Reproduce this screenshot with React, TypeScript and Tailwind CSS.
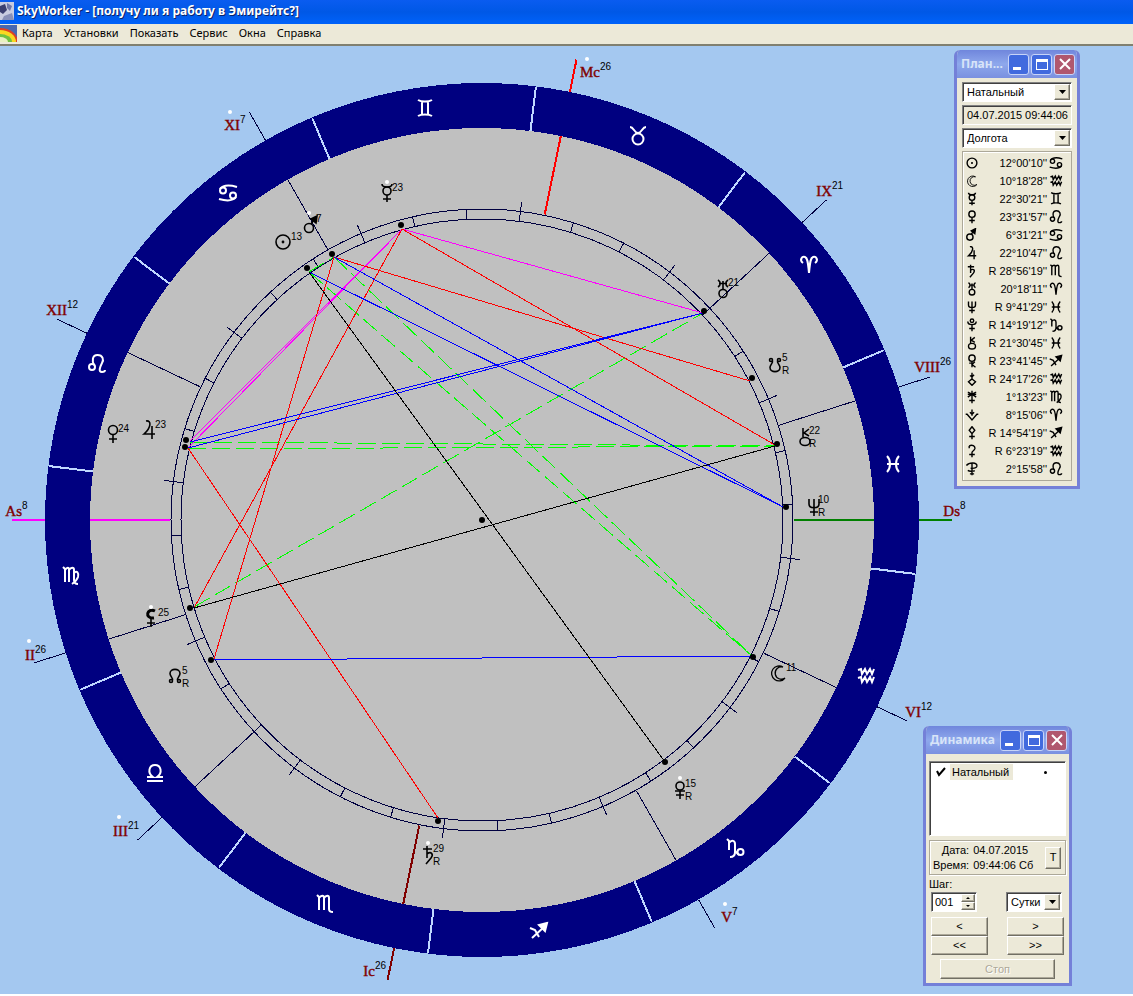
import React, { useState } from "react";

const CX = 482;
const CY = 520;

// every glyph is drawn in a 20x20 box
const glyphs: Record<string, React.ReactNode> = {
  aries: <path d="M4 8C0 5 3 1 6 2C9 3 9 9 10 18C11 9 11 3 14 2C17 1 20 5 16 8" />,
  taurus: (
    <>
      <circle cx="10" cy="13" r="5.5" />
      <path d="M2 1C6 1 6 7 10 7S14 1 18 1" />
    </>
  ),
  gemini: <path d="M3 1C6 3 14 3 17 1M3 17C6 15 14 15 17 17M7 3V16M13 3V16" />,
  cancer: (
    <>
      <circle cx="5" cy="7.5" r="3" />
      <circle cx="15" cy="12.5" r="3" />
      <path d="M2 6C5 2 12 2 19 4M18 14C15 18 8 18 1 16" />
    </>
  ),
  leo: (
    <>
      <circle cx="5" cy="13" r="3" />
      <path d="M7 11C5 7 5 1 10.5 1S17 6 15 9C13 13 11 18 15 18C17 18 18 17 18 16" />
    </>
  ),
  virgo: (
    <path d="M2 1L4 3V16M4 4C6 1 8 1 8 4V16M8 4C10 1 13 1 13 4V14C13 17 15 18 17 18M13 7C16 4 18 7 17 11C16 14 14 16 11 18" />
  ),
  libra: <path d="M2 18H18M2 14H8C2 10 4 2 10 2S18 10 12 14H18" />,
  scorpio: <path d="M2 1L4 3V16M4 4C6 1 9 1 9 4V16M9 4C11 1 14 1 14 4V15C14 18 16 18 18 18" />,
  sagittarius: (
    <>
      <path d="M3 17L15 6M1 7L6 9L10 16" />
      <path d="M18 2L10 4L16 10Z" fill="currentColor" />
    </>
  ),
  capricorn: (
    <>
      <path d="M2 1L4 3V12M4 5C7 1 10 3 10 6V14C10 18 8 19 5 19M10 13L14 17" />
      <circle cx="15.5" cy="14" r="3" />
    </>
  ),
  aquarius: (
    <>
      <path d="M2 4L5 3L6 8L9 3L11 8L14 3L16 8L18 3" />
      <path d="M2 12L5 11L6 16L9 11L11 16L14 11L16 16L18 11" />
    </>
  ),
  pisces: <path d="M4 2C8 6 8 14 4 18M16 2C12 6 12 14 16 18M4 10H16" />,

  sun: (
    <>
      <circle cx="10" cy="10" r="7" />
      <circle cx="10" cy="10" r="0.6" />
    </>
  ),
  moon: (
    <path
      d="M15 4A7.5 7.5 0 1 0 17 15M15 4A6.2 6.2 0 1 0 17 15"
      strokeWidth="1.3"
    />
  ),
  mercury: (
    <>
      <circle cx="10" cy="8" r="4" />
      <path d="M5 1C5 5 15 5 15 1M10 12V19M6 16H14" />
    </>
  ),
  venus: (
    <>
      <circle cx="10" cy="6" r="4.5" />
      <path d="M10 11V19M6 15H14" />
    </>
  ),
  mars: (
    <>
      <circle cx="7" cy="13" r="4.5" />
      <path d="M9 9L13 3" />
      <path d="M15 1L9 4L14 8Z" fill="currentColor" />
    </>
  ),
  jupiter: <path d="M7 1C13 0 12 8 5 14H16M13 6V19" />,
  saturn: <path d="M4 4H13M8 1V13M8 9C12 6 15 9 12 13L7 19" />,
  uranus: (
    <>
      <circle cx="10" cy="14.5" r="4" />
      <path d="M10 2V10M5 1C8 3 8 6 5 8M15 1C12 3 12 6 15 8M6 4.5H14" />
    </>
  ),
  neptune: <path d="M5 2V7C5 12 15 12 15 7V2M10 2V19M6 15H14" />,
  pluto: (
    <>
      <circle cx="10" cy="4" r="2.5" />
      <path d="M4 5C4 11 16 11 16 5M10 10V19M6 15H14" />
    </>
  ),
  plutoRound: (
    <>
      <circle cx="10" cy="6" r="4" />
      <path d="M5 11H15M10 11V19M6 15H14" />
    </>
  ),
  chiron: (
    <>
      <ellipse cx="10" cy="14.5" rx="5" ry="4" />
      <path d="M8 1V10M14 2L9 6L14 9" />
    </>
  ),
  selena: (
    <>
      <circle cx="10" cy="6" r="4.5" />
      <path d="M10 11V19M14 11L10 15L15 19M6 13H10" />
    </>
  ),
  pallas: <path d="M10 1V10M7 5L10 7L13 4M10 10L15 14L10 19L5 14Z" />,
  juno: <path d="M10 1V19M4 3C8 4 12 8 16 10M16 3C12 4 8 8 4 10M4 6H16M6 15H14" />,
  vesta: <path d="M1 9H3L10 17L17 9H19M10 2V11M7 6L10 9L13 6" />,
  diamond: <path d="M10 1L14 6L10 11L6 6ZM10 11V19M6 15H14" />,
  ceres: <path d="M6 3C10 0 15 3 14 7C13 10 10 10 10 12V19M6 15H14M6 3V6" />,
  cross: <path d="M2 5C6 0 18 0 17 6C16 10 10 9 8 9M10 2V19M4 12C8 15 12 12 14 13M7 17H13" />,
  lilith: (
    <>
      <path d="M14 3C6 -1 3 11 13 10" strokeWidth="3" />
      <path d="M10 10V19M6 15H14" />
    </>
  ),
  northNode: (
    <>
      <circle cx="6" cy="15" r="1.5" />
      <circle cx="14" cy="15" r="1.5" />
      <path d="M7.5 14C8 12 5 10 5 7.5C5 2 15 2 15 7.5C15 10 12 12 12.5 14" />
    </>
  ),
  southNode: (
    <>
      <circle cx="6" cy="5" r="1.5" />
      <circle cx="14" cy="5" r="1.5" />
      <path d="M7.5 6C8 8 5 10 5 12.5C5 18 15 18 15 12.5C15 10 12 8 12.5 6" />
    </>
  ),
};

interface GlyphProps {
  name: string;
  x: number;
  y: number;
  color?: string;
  weight?: number;
}

const Glyph: React.FC<GlyphProps> = ({ name, x, y, color = "#000", weight = 1.6 }) => (
  <g
    transform={`translate(${x - 10} ${y - 10})`}
    color={color}
    stroke={color}
    fill="none"
    strokeWidth={weight}
  >
    {glyphs[name]}
  </g>
);

const signs: [string, number, number][] = [
  ["gemini", 425, 109],
  ["taurus", 638, 136],
  ["aries", 809, 265],
  ["pisces", 893, 464],
  ["aquarius", 866, 676],
  ["capricorn", 735, 848],
  ["sagittarius", 539, 931],
  ["scorpio", 325, 904],
  ["libra", 155, 773],
  ["virgo", 71, 576],
  ["leo", 97, 364],
  ["cancer", 228, 193],
];

interface House {
  name: string;
  deg: string;
  x: number;
  y: number;
  angle: number;
  color?: string;
  dot?: [number, number];
}

// x is the left edge of the degree number, angle goes counter-clockwise from Ds
const houses: House[] = [
  { name: "Ds", deg: "8", x: 960, y: 516, angle: 0, color: "#008000" },
  { name: "VIII", deg: "26", x: 940, y: 372, angle: 17.7 },
  { name: "IX", deg: "21", x: 832, y: 196, angle: 42.9 },
  { name: "Mc", deg: "26", x: 600, y: 77, angle: 78.4, color: "#ff0000", dot: [587, 59] },
  { name: "XI", deg: "7", x: 240, y: 130, angle: 119.7, dot: [230, 112] },
  { name: "XII", deg: "12", x: 67, y: 315, angle: 154.7 },
  { name: "As", deg: "8", x: 22, y: 516, angle: 180, color: "#ff00ff" },
  { name: "II", deg: "26", x: 35, y: 660, angle: 197.7, dot: [29, 641] },
  { name: "III", deg: "21", x: 128, y: 836, angle: 222.9, dot: [119, 817] },
  { name: "Ic", deg: "26", x: 375, y: 976, angle: 258.4, color: "#800000" },
  { name: "V", deg: "7", x: 732, y: 922, angle: 299.7, dot: [725, 904] },
  { name: "VI", deg: "12", x: 921, y: 717, angle: 334.7 },
];

interface Planet {
  glyph: string;
  x: number;
  y: number;
  deg: string;
  tx: number;
  ty: number;
  retro?: boolean;
  dot?: [number, number];
}

const planets: Planet[] = [
  { glyph: "sun", x: 283, y: 242, deg: "13", tx: 291, ty: 240 },
  { glyph: "mars", x: 312, y: 225, deg: "7", tx: 316, ty: 222, dot: [309, 213] },
  { glyph: "mercury", x: 387, y: 193, deg: "23", tx: 392, ty: 191, dot: [387, 182] },
  { glyph: "uranus", x: 723, y: 289, deg: "21", tx: 728, ty: 286 },
  { glyph: "southNode", x: 775, y: 365, deg: "5", tx: 782, ty: 361, retro: true },
  { glyph: "chiron", x: 805, y: 437, deg: "22", tx: 809, ty: 434, retro: true },
  { glyph: "neptune", x: 814, y: 507, deg: "10", tx: 818, ty: 503, retro: true },
  { glyph: "moon", x: 778, y: 673, deg: "11", tx: 786, ty: 671 },
  { glyph: "plutoRound", x: 680, y: 790, deg: "15", tx: 685, ty: 787, retro: true, dot: [680, 778] },
  { glyph: "saturn", x: 429, y: 855, deg: "29", tx: 433, ty: 852, retro: true, dot: [428, 843] },
  { glyph: "northNode", x: 175, y: 676, deg: "5", tx: 182, ty: 674, retro: true },
  { glyph: "lilith", x: 151, y: 618, deg: "25", tx: 158, ty: 616, dot: [151, 607] },
  { glyph: "venus", x: 113, y: 434, deg: "24", tx: 118, ty: 432 },
  { glyph: "jupiter", x: 149, y: 430, deg: "23", tx: 155, ty: 428 },
];

const points: [number, number][] = [
  [307, 268], [332, 254], [401, 225], [704, 311], [752, 378],
  [777, 444], [786, 507], [753, 657], [665, 762], [438, 821],
  [211, 660], [190, 608], [185, 447], [186, 440], [CX, CY],
];

// x1, y1, x2, y2, color
const aspects: [number, number, number, number, string][] = [
  [402, 229, 703, 313, "#ff00ff"],
  [402, 229, 190, 441, "#ff00ff"],
  [402, 229, 188, 448, "#ff00ff"],
  [402, 229, 194, 608, "#ff0000"],
  [334, 257, 214, 659, "#ff0000"],
  [402, 229, 775, 445, "#ff0000"],
  [334, 257, 750, 381, "#ff0000"],
  [188, 448, 438, 818, "#ff0000"],
  [190, 442, 703, 313, "#0000ff"],
  [188, 448, 703, 313, "#0000ff"],
  [309, 272, 783, 507, "#0000ff"],
  [334, 257, 783, 507, "#0000ff"],
  [214, 660, 752, 656, "#0000ff"],
  [194, 608, 775, 446, "#000000"],
  [309, 272, 665, 762, "#000000"],
];

const dashedAspects: [number, number, number, number][] = [
  [190, 442, 775, 446],
  [188, 449, 775, 446],
  [194, 607, 703, 313],
  [309, 272, 752, 656],
  [334, 257, 752, 656],
  [309, 272, 334, 257],
];

interface RayProps {
  angle: number;
  from: number;
  to: number;
  color: string;
  width?: number;
}

const Ray: React.FC<RayProps> = ({ angle, from, to, color, width = 1 }) => {
  const a = (angle * Math.PI) / 180;
  return (
    <line
      x1={CX + from * Math.cos(a)}
      y1={CY - from * Math.sin(a)}
      x2={CX + to * Math.cos(a)}
      y2={CY - to * Math.sin(a)}
      stroke={color}
      strokeWidth={width}
    />
  );
};

const Chart: React.FC = () => (
  <svg viewBox="0 46 1133 948" className="block w-full" role="img" aria-label="Натальный">
    <g shapeRendering="crispEdges">
      <circle cx={CX} cy={CY} r="437" fill="#000080" />
      <circle cx={CX} cy={CY} r="392" fill="#c0c0c0" />
      <circle cx={CX} cy={CY} r="311" fill="none" stroke="#000040" />
      <circle cx={CX} cy={CY} r="301" fill="none" stroke="#000040" />
      {Array.from({ length: 12 }).map((_, i) => (
        <Ray key={i} angle={i * 30 - 7.1} from={392} to={436} color="#c0d8ff" width={2} />
      ))}
      {Array.from({ length: 36 }).map((_, i) => (
        <Ray
          key={i}
          angle={i * 10 - 7.1}
          from={301}
          to={i % 3 === 0 ? 320 : 311}
          color="#000040"
        />
      ))}
      {houses.map((h) => (
        <g key={h.name}>
          <Ray angle={h.angle} from={312} to={392} color={h.color ?? "#000040"} width={h.color ? 2 : 1} />
          <Ray angle={h.angle} from={437} to={470} color={h.color ?? "#000040"} width={h.color ? 2 : 1} />
        </g>
      ))}
      {dashedAspects.map(([x1, y1, x2, y2], i) => (
        <line key={i} x1={x1} y1={y1} x2={x2} y2={y2} stroke="#00ff00" strokeDasharray="18 6" />
      ))}
      {aspects.map(([x1, y1, x2, y2, color], i) => (
        <line key={i} x1={x1} y1={y1} x2={x2} y2={y2} stroke={color} />
      ))}
    </g>

    {points.map(([x, y]) => (
      <circle key={`${x}-${y}`} cx={x} cy={y} r="3" />
    ))}

    {signs.map(([name, x, y]) => (
      <Glyph key={name} name={name} x={x} y={y} color="#fff" weight={2} />
    ))}

    {houses.map((h) => (
      <g key={h.name}>
        <text
          x={h.x}
          y={h.y}
          textAnchor="end"
          fill="#800000"
          stroke="#800000"
          strokeWidth="0.4"
          className="font-['Liberation_Serif',serif] text-[15px]"
        >
          {h.name}
        </text>
        <text x={h.x} y={h.y - 7} className="font-['Liberation_Sans',sans-serif] text-[10px]">
          {h.deg}
        </text>
        {h.dot && <circle cx={h.dot[0]} cy={h.dot[1]} r="2" fill="#fff" />}
      </g>
    ))}

    {planets.map((p) => (
      <g key={p.glyph}>
        <Glyph name={p.glyph} x={p.x} y={p.y} />
        <text x={p.tx} y={p.ty} className="font-['Liberation_Sans',sans-serif] text-[10px]">
          {p.deg}
        </text>
        {p.retro && (
          <text x={p.tx} y={p.ty + 13} className="font-['Liberation_Sans',sans-serif] text-[10px]">
            R
          </text>
        )}
        {p.dot && <circle cx={p.dot[0]} cy={p.dot[1]} r="2" fill="#fff" />}
      </g>
    ))}
  </svg>
);

const rows: [string, string, string][] = [
  ["sun", "12°00'10''", "cancer"],
  ["moon", "10°18'28''", "aquarius"],
  ["mercury", "22°30'21''", "gemini"],
  ["venus", "23°31'57''", "leo"],
  ["mars", "6°31'21''", "cancer"],
  ["jupiter", "22°10'47''", "leo"],
  ["saturn", "R 28°56'19''", "scorpio"],
  ["uranus", "20°18'11''", "aries"],
  ["neptune", "R 9°41'29''", "pisces"],
  ["pluto", "R 14°19'12''", "capricorn"],
  ["chiron", "R 21°30'45''", "pisces"],
  ["selena", "R 23°41'45''", "sagittarius"],
  ["pallas", "R 24°17'26''", "aquarius"],
  ["juno", "1°13'23''", "virgo"],
  ["vesta", "8°15'06''", "aries"],
  ["diamond", "R 14°54'19''", "sagittarius"],
  ["ceres", "R 6°23'19''", "aquarius"],
  ["cross", "2°15'58''", "leo"],
];

const SmallGlyph: React.FC<{ name: string }> = ({ name }) => (
  <svg viewBox="0 0 20 20" className="block size-[14px]" stroke="#000" fill="none" strokeWidth="2">
    {glyphs[name]}
  </svg>
);

const raised =
  "border border-t-white border-l-white border-r-[#716f64] border-b-[#716f64] bg-[#ece9d8] shadow-[inset_-1px_-1px_0_#aca899]";
const sunken =
  "border border-t-[#808080] border-l-[#808080] border-r-white border-b-white shadow-[inset_1px_1px_0_#404040]";

interface WindowProps {
  title: string;
  className: string;
  children: React.ReactNode;
}

const ToolWindow: React.FC<WindowProps> = ({ title, className, children }) => (
  <section
    aria-label={title}
    className={`absolute overflow-hidden rounded-t-md border-[3px] border-t-0 border-[#7480d8] bg-[#ece9d8] ${className}`}
  >
    <header className="flex h-7 items-center gap-[2px] bg-linear-to-b from-[#7086dc] via-[#8ea8ec] to-[#7a90e0] pr-[2px] pl-1">
      <h2 className="flex-1 font-['Noto_Sans',sans-serif] text-[12px] font-bold whitespace-nowrap text-[#d8e4f8]">
        {title}
      </h2>
      <button
        aria-label="Свернуть"
        className="flex size-[21px] items-end rounded-[3px] border border-[#c8d4f8] bg-[#416ade] p-1"
      >
        <span className="h-[3px] w-2 bg-white" />
      </button>
      <button
        aria-label="Развернуть"
        className="flex size-[21px] items-center justify-center rounded-[3px] border border-[#c8d4f8] bg-[#416ade]"
      >
        <span className="h-[11px] w-3 border border-t-[3px] border-white" />
      </button>
      <button
        aria-label="Закрыть"
        className="flex size-[21px] items-center justify-center rounded-[3px] border border-[#c8d4f8] bg-[#b0576e]"
      >
        <svg viewBox="0 0 12 12" className="size-3" stroke="#fff" strokeWidth="2">
          <path d="M1 1L11 11M11 1L1 11" />
        </svg>
      </button>
    </header>
    {children}
  </section>
);

interface ComboProps {
  label: string;
  options: string[];
  className?: string;
}

const Combo: React.FC<ComboProps> = ({ label, options, className = "" }) => (
  <div className={`relative h-5 bg-white ${sunken} ${className}`}>
    <select aria-label={label} className="block h-full w-full appearance-none pl-1 outline-none">
      {options.map((o) => (
        <option key={o}>{o}</option>
      ))}
    </select>
    <span
      className={`pointer-events-none absolute top-px right-px bottom-px flex w-4 items-center justify-center ${raised}`}
    >
      <svg viewBox="0 0 7 4" className="h-1 w-[7px]">
        <path d="M0 0H7L3.5 4Z" />
      </svg>
    </span>
  </div>
);

const PlanetsWindow: React.FC = () => (
  <ToolWindow title="План..." className="top-1 right-[53px] w-[126px]">
    <div className="flex flex-col gap-[3px] px-[5px] pt-1 pb-[5px]">
      <Combo label="Карта" options={["Натальный", "Транзит"]} />
      <input
        aria-label="Дата и время"
        readOnly
        defaultValue="04.07.2015 09:44:06"
        className={`h-5 w-full pl-1 outline-none ${sunken}`}
      />
      <Combo label="Величина" options={["Долгота", "Широта"]} />
      <div className="border border-[#aca899] py-[2px] shadow-[inset_1px_1px_0_#fff]">
        <table className="w-full">
          <tbody>
            {rows.map(([planet, value, sign]) => (
              <tr key={planet} className="h-[18px]">
                <td className="pl-[2px]">
                  <SmallGlyph name={planet} />
                </td>
                <td className="text-right leading-4 whitespace-nowrap">{value}</td>
                <td className="w-6 pl-[2px]">
                  <SmallGlyph name={sign} />
                </td>
              </tr>
            ))}
          </tbody>
        </table>
      </div>
    </div>
  </ToolWindow>
);

const DynamicsWindow: React.FC = () => {
  const [step, setStep] = useState(1);
  const change = (n: number) => setStep((s) => Math.min(999, Math.max(1, s + n)));

  return (
    <ToolWindow title="Динамика" className="right-[61px] bottom-[8px] w-[149px]">
      <div className="px-[3px] pt-[7px] pb-1">
        <ul className={`h-[75px] bg-white p-[2px] ${sunken}`}>
          <li className="flex h-4 items-center">
            <svg viewBox="0 0 10 10" className="mx-1 size-[10px]" fill="none" stroke="#000" strokeWidth="2">
              <path d="M1 4L3 8L9 1" />
            </svg>
            <span className="bg-[#ece9d8] pr-1 pl-[2px] leading-4">Натальный</span>
            <span className="mr-4 ml-auto size-[3px] rounded-full bg-black" />
          </li>
        </ul>

        <div className="mt-1 flex h-[35px] items-center border border-[#aca899] pr-1 pl-[3px] shadow-[inset_1px_1px_0_#fff,1px_1px_0_#fff]">
          <dl className="grid flex-1 grid-cols-[auto_1fr] gap-x-1 leading-[15px]">
            <dt className="text-right">Дата:</dt>
            <dd>04.07.2015</dd>
            <dt>Время:</dt>
            <dd className="whitespace-nowrap">09:44:06 Сб</dd>
          </dl>
          <button className={`h-[22px] w-4 ${raised}`}>T</button>
        </div>

        <label htmlFor="step" className="mt-[2px] block leading-[15px]">
          Шаг:
        </label>
        <div className="flex justify-between pr-1 pl-[2px]">
          <div className={`flex h-5 w-[46px] bg-white p-px ${sunken}`}>
            <input
              id="step"
              value={String(step).padStart(3, "0")}
              onChange={(e) => setStep(Number(e.target.value) || 1)}
              className="w-7 pl-[2px] outline-none"
            />
            <div className="flex flex-1 flex-col">
              <button
                aria-label="Больше"
                onClick={() => change(1)}
                className={`flex flex-1 items-center justify-center ${raised}`}
              >
                <svg viewBox="0 0 4 2" className="h-[2px] w-1">
                  <path d="M0 2H4L2 0Z" />
                </svg>
              </button>
              <button
                aria-label="Меньше"
                onClick={() => change(-1)}
                className={`flex flex-1 items-center justify-center ${raised}`}
              >
                <svg viewBox="0 0 4 2" className="h-[2px] w-1">
                  <path d="M0 0H4L2 2Z" />
                </svg>
              </button>
            </div>
          </div>
          <Combo label="Единица шага" options={["Сутки", "Часы"]} className="w-14" />
        </div>

        <div className="mt-[5px] grid grid-cols-[57px_57px] justify-between pr-[2px] pl-[2px]">
          <button className={`h-[19px] ${raised}`}>&lt;</button>
          <button className={`h-[19px] ${raised}`}>&gt;</button>
          <button className={`h-[19px] ${raised}`}>&lt;&lt;</button>
          <button className={`h-[19px] ${raised}`}>&gt;&gt;</button>
        </div>
        <button
          disabled
          className={`mx-auto mt-1 block h-5 w-[115px] text-[#aca899] [text-shadow:1px_1px_0_#fff] ${raised}`}
        >
          Стоп
        </button>
      </div>
    </ToolWindow>
  );
};

const menu = ["Карта", "Установки", "Показать", "Сервис", "Окна", "Справка"];

const App: React.FC = () => {
  return (
    <div className="min-h-screen bg-white font-['Liberation_Sans',Arial,sans-serif] text-[11px] text-black">
      <header className="flex h-6 items-center gap-[3px] bg-linear-to-b from-[#0a5cf0] via-[#0058e6] to-[#0062fa] pb-[2px]">
        <svg viewBox="0 0 14 18" className="h-[18px] w-[14px]">
          <path d="M0 0H14V18H0Z" fill="#c8cce0" />
          <path d="M0 4L5 2L7 8L3 12L0 10Z" fill="#3a3f70" />
          <path d="M7 1L12 4L10 9L7 6Z" fill="#7078a8" />
          <path d="M4 14L12 11L14 18H2Z" fill="#8890b8" />
        </svg>
        <h1 className="font-['Noto_Sans',sans-serif] text-[12px] font-bold whitespace-nowrap text-white [text-shadow:1px_1px_0_#0a246a]">
          SkyWorker - [получу ли я работу в Эмирейтс?]
        </h1>
      </header>

      <nav className="flex h-[22px] items-center border-b-2 border-[#808070] bg-[#ece9d8] pb-[2px]">
        <svg viewBox="0 0 17 17" className="mr-[5px] size-[17px]">
          <path d="M0 0H17V17H0Z" fill="#4868b0" />
          <ellipse cx="0" cy="17" rx="18" ry="14" fill="#e04020" />
          <ellipse cx="0" cy="17" rx="16" ry="12" fill="#f8d820" />
          <ellipse cx="0" cy="17" rx="12" ry="8" fill="#70c040" />
          <ellipse cx="0" cy="17" rx="8" ry="5" fill="#e8f0c0" />
        </svg>
        <ul className="flex gap-[11px] font-['Noto_Sans',sans-serif]">
          {menu.map((item) => (
            <li key={item}>
              <button className="whitespace-nowrap">{item}</button>
            </li>
          ))}
        </ul>
      </nav>

      <main className="relative bg-[#a4c8f0]">
        <Chart />
        <PlanetsWindow />
        <DynamicsWindow />
      </main>
    </div>
  );
};

export default App;
